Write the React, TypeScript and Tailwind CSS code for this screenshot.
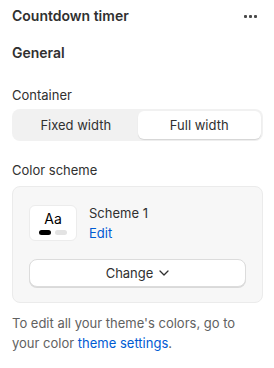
import React from "react";

export default function App() {
  return (
    <div
      className="w-[274px] h-[368px] bg-white text-[#303030] text-[13px] leading-5"
      style={{ fontFamily: "Inter, 'Noto Sans', sans-serif" }}
    >
      <div className="h-8 flex items-center justify-between pl-3 pr-[17px]">
        <span className="text-[14px] font-semibold">Countdown timer</span>
        <div className="flex gap-[2px] items-center">
          <span className="w-[3px] h-[3px] rounded-[1px] bg-[#4a4a4a]" />
          <span className="w-[3px] h-[3px] rounded-[1px] bg-[#4a4a4a]" />
          <span className="w-[3px] h-[3px] rounded-[1px] bg-[#4a4a4a]" />
        </div>
      </div>
      <div className="px-3">
        <div className="mt-[11px] text-[14px] font-semibold">General</div>
        <div className="mt-[22px]">Container</div>
        <div className="mt-1 h-8 w-[251px] rounded-lg bg-[#f1f1f1] p-[2px] flex">
          <div className="flex-1 flex items-center justify-center text-[#303030]">Fixed width</div>
          <div className="flex-1 flex items-center justify-center rounded-md bg-white shadow-[0_1px_1px_rgba(0,0,0,0.12)]">
            Full width
          </div>
        </div>
        <div className="mt-[19px]">Color scheme</div>
        <div className="mt-[6px] w-[251px] h-[117px] rounded-lg border border-[#ebebeb] bg-[#f7f7f7] pt-[18px] px-4">
          <div className="flex items-start gap-3 h-9">
            <div className="w-12 h-9 rounded-md bg-white border border-[#ececec] flex flex-col items-center justify-center">
              <span className="text-[14px] leading-4 text-black">Aa</span>
              <div className="flex gap-1 mt-[3px]">
                <span className="w-3 h-[5px] rounded-full bg-black" />
                <span className="w-3 h-[5px] rounded-full bg-[#e3e3e3]" />
              </div>
            </div>
            <div className="flex flex-col -mt-[2px]">
              <span>Scheme 1</span>
              <span className="text-[#005bd3]">Edit</span>
            </div>
          </div>
          <button className="mt-[18px] w-full h-7 rounded-lg bg-white border border-[#dcdcdc] shadow-[0_1px_0_rgba(0,0,0,0.12)] flex items-center justify-center gap-[6px] text-[13px] font-normal text-[#303030]">
            Change
            <svg width="10" height="6" viewBox="0 0 10 6" fill="none">
              <path d="M1 1l4 4 4-4" stroke="#303030" strokeWidth="1.3" strokeLinecap="round" strokeLinejoin="round" />
            </svg>
          </button>
        </div>
        <p className="mt-[10px] text-[#616161]">
          To edit all your theme's colors, go to your color{" "}
          <span className="text-[#005bd3]">theme settings</span>.
        </p>
      </div>
    </div>
  );
}
